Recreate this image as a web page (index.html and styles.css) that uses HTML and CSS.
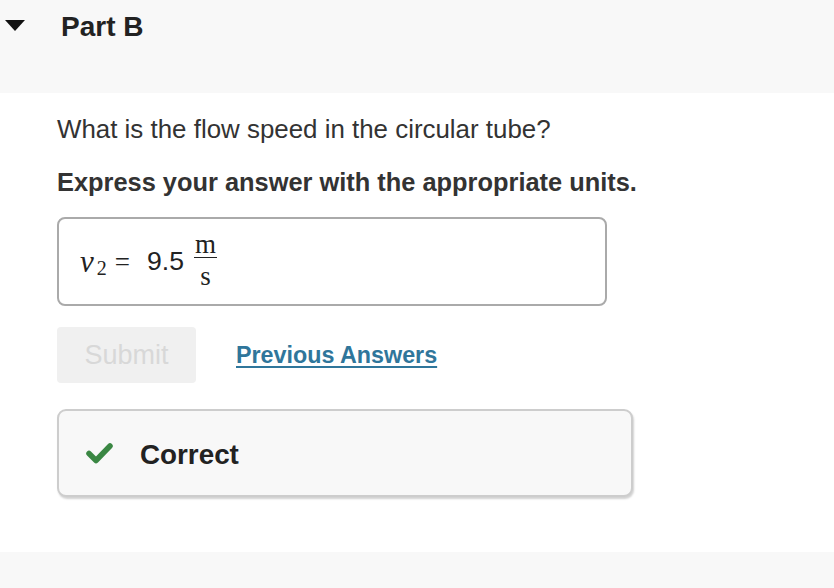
FILE: index.html
```html
<!DOCTYPE html>
<html lang="en">
<head>
    <meta charset="UTF-8">
    <meta name="viewport" content="width=device-width, initial-scale=1.0">
    <title>Part B</title>
    <link rel="stylesheet" href="styles.css">
</head>
<body>
    <header class="part-header">
        <svg class="toggle" width="20" height="12" viewBox="0 0 20 12" aria-hidden="true">
            <polygon points="0,0 20,0 10,11" fill="#111"/>
        </svg>
        <h2 class="part-title">Part B</h2>
    </header>

    <main class="part-body">
        <p class="question">What is the flow speed in the circular tube?</p>
        <p class="instruction">Express your answer with the appropriate units.</p>

        <div class="answer-box">
            <span class="math">
                <span class="var">v</span><span class="sub">2</span>
                <span class="eq">=</span>
                <span class="value">9.5</span>
                <span class="frac">
                    <span class="num">m</span>
                    <span class="den">s</span>
                </span>
            </span>
        </div>

        <div class="actions">
            <button class="submit" disabled>Submit</button>
            <a href="#" class="prev-link">Previous Answers</a>
        </div>

        <div class="feedback">
            <svg class="check" width="27" height="22" viewBox="0 0 27 22" aria-hidden="true">
                <polyline points="3,11.5 10,18.5 24,4" fill="none" stroke="#3a8743" stroke-width="5.5" stroke-linecap="round" stroke-linejoin="round"/>
            </svg>
            <span class="feedback-text">Correct</span>
        </div>
    </main>

    <div class="part-footer"></div>
</body>
</html>
```

FILE: styles.css
```css
body {
    margin: 0;
    font-family: "Liberation Sans", Arial, Helvetica, sans-serif;
    color: #222;
    background-color: #fff;
}

.part-header {
    background-color: #f8f8f8;
    height: 93px;
    box-sizing: border-box;
    padding: 11px 0 0 5px;
    display: flex;
    align-items: flex-start;
}

.toggle {
    margin-top: 9px;
    margin-right: 36px;
    flex-shrink: 0;
}

.part-title {
    margin: 0;
    font-size: 28px;
    line-height: 32px;
    font-weight: bold;
    color: #222;
}

.part-body {
    padding: 20px 0 55px 57px;
}

.question {
    margin: 0;
    font-size: 25.9px;
    line-height: 32px;
    color: #333;
}

.instruction {
    margin: 21px 0 0;
    font-size: 25.4px;
    line-height: 32px;
    font-weight: bold;
    color: #333;
}

.answer-box {
    margin-top: 19px;
    width: 550px;
    height: 89px;
    box-sizing: border-box;
    border: 2px solid #aaa;
    border-radius: 8px;
    display: flex;
    align-items: center;
    padding-left: 21px;
}

/* each piece is centred on its own line box, then nudged to the shared baseline */
.math {
    display: flex;
    align-items: center;
    color: #222;
    line-height: 32px;
}

.var {
    font-family: "Liberation Serif", "Times New Roman", serif;
    font-style: italic;
    font-size: 31px;
    margin-right: 3px;
}

.sub {
    font-family: "Liberation Serif", "Times New Roman", serif;
    font-size: 20px;
    position: relative;
    top: 6px;
}

.eq {
    font-family: "Liberation Serif", "Times New Roman", serif;
    font-size: 27px;
    margin-left: 8px;
}

.value {
    font-size: 26.6px;
    margin-left: 17px;
    position: relative;
    top: -1px;
}

.frac {
    display: inline-flex;
    flex-direction: column;
    align-items: center;
    margin-left: 10px;
    padding-bottom: 4px;
    font-family: "Liberation Serif", "Times New Roman", serif;
    font-size: 27px;
}

.num {
    line-height: 20px;
    padding: 0 1px 3px;
    border-bottom: 1.5px solid #222;
}

.den {
    line-height: 20px;
    padding-top: 8px;
}

.actions {
    margin-top: 21px;
    display: flex;
    align-items: center;
    gap: 40px;
}

.submit {
    width: 139px;
    height: 56px;
    border: none;
    border-radius: 4px;
    background-color: #f0f0f0;
    color: #d8d8d8;
    font-family: inherit;
    font-size: 27px;
    padding: 0;
}

.prev-link {
    font-size: 23.3px;
    font-weight: bold;
    color: #2f769b;
    text-decoration: underline;
    text-underline-offset: 3px;
    text-decoration-thickness: 2px;
}

.feedback {
    margin-top: 26px;
    width: 576px;
    height: 88px;
    box-sizing: border-box;
    border: 2px solid #cdcdcd;
    border-radius: 9px;
    background-color: #f8f8f8;
    box-shadow: 1px 2px 2px rgba(0, 0, 0, 0.18);
    display: flex;
    align-items: center;
    padding-left: 27px;
}

.check {
    margin-right: 27px;
}

.feedback-text {
    font-size: 27.8px;
    font-weight: bold;
    color: #222;
    padding-top: 4px;
}

.part-footer {
    background-color: #f8f8f8;
    height: 40px;
}
```
